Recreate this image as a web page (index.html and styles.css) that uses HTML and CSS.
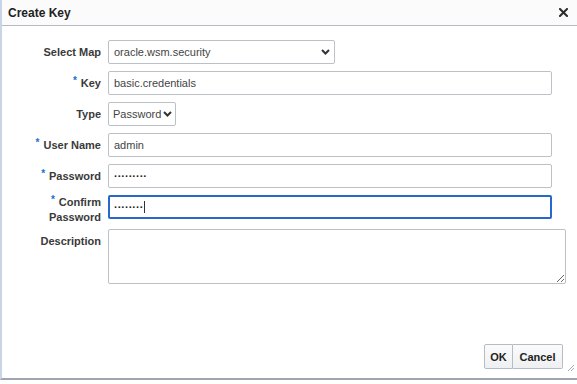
FILE: index.html
```html
<!DOCTYPE html>
<html>
<head>
<meta charset="utf-8">
<link rel="stylesheet" href="styles.css">
</head>
<body>
<div class="dialog">
  <div class="titlebar">
    <span class="title">Create Key</span>
    <svg class="close" width="9" height="9" viewBox="0 0 9 9"><path d="M1 1 L8 8 M8 1 L1 8" stroke="#2b2b2b" stroke-width="2" stroke-linecap="square"/></svg>
  </div>
  <div class="form">
    <label class="lbl">Select Map</label>
    <div class="field"><select class="sel sel-map"><option>oracle.wsm.security</option></select></div>

    <label class="lbl"><span class="req">*</span>Key</label>
    <div class="field"><input class="inp" type="text" value="basic.credentials"></div>

    <label class="lbl">Type</label>
    <div class="field"><select class="sel sel-type"><option>Password</option></select></div>

    <label class="lbl"><span class="req">*</span>User Name</label>
    <div class="field"><input class="inp" type="text" value="admin"></div>

    <label class="lbl"><span class="req">*</span>Password</label>
    <div class="field"><input class="inp dots" type="text" value="·········"></div>

    <label class="lbl two"><span class="req">*</span>Confirm<br>Password</label>
    <div class="field"><div class="inp focus dots">········<span class="caret"></span></div></div>

    <label class="lbl top">Description</label>
    <div class="field"><textarea class="ta"></textarea></div>
  </div>
  <div class="footer">
    <div class="btns">
      <button class="btn ok">OK</button><button class="btn cancel">Cancel</button>
    </div>
  </div>
  <svg class="grip" width="8" height="8" viewBox="0 0 8 8"><path d="M7 1 L1 7 M7 4 L4 7" stroke="#a9adb3" stroke-width="1"/></svg>
</div>
</body>
</html>
```
FILE: styles.css
```css
* { box-sizing: border-box; }
html, body { margin: 0; padding: 0; background: #fff; }
body { font-family: "Liberation Sans", Arial, sans-serif; color: #333; }

.dialog {
  position: relative;
  width: 577px;
  height: 380px;
  border-left: 2px solid #c9d4e6;
  border-bottom: 2px solid #9ea5b0;
  display: flex;
  flex-direction: column;
  background: #fff;
}

.titlebar {
  height: 26px;
  border-bottom: 1px solid #b5bac2;
  display: flex;
  align-items: center;
  justify-content: space-between;
  padding: 0 9px 0 6px;
  background: #fbfbfc;
}
.title { font-size: 12px; font-weight: bold; color: #222; }
.close { display: block; }

.form {
  display: grid;
  grid-template-columns: 99px 1fr;
  column-gap: 7px;
  row-gap: 7px;
  padding-top: 14px;
  padding-right: 10px;
}

.lbl {
  font-size: 11px;
  font-weight: bold;
  color: #3a3a3a;
  text-align: right;
  align-self: center;
  line-height: 13px;
}
.lbl.two { line-height: 14px; margin: -2px 0 -2px 0; padding-top: 2px; }
.lbl.top { align-self: start; padding-top: 6px; }
.req {
  color: #1a6fd1;
  font-size: 10px;
  position: relative;
  top: -3px;
  margin-right: 4px;
}

.field { display: flex; }

.inp {
  width: 444px;
  height: 24px;
  border: 1px solid #bcc1c8;
  border-radius: 2px;
  padding: 0 5px;
  font-family: "Liberation Sans", Arial, sans-serif;
  font-size: 11px;
  color: #444;
  background: #fff;
  display: flex;
  align-items: center;
  outline: none;
}
.dots { font-size: 11px; color: #222; font-weight: bold; }
.focus { border: 2px solid #2768cc; padding: 0 4px; }
.caret { display: inline-block; width: 1px; height: 12px; background: #333; margin-left: 1px; }

.sel {
  -webkit-appearance: none;
  appearance: none;
  height: 24px;
  border: 1px solid #bcc1c8;
  border-radius: 2px;
  padding: 0 18px 0 5px;
  font-family: "Liberation Sans", Arial, sans-serif;
  font-size: 11px;
  color: #444;
  background: #fff url("data:image/svg+xml,%3Csvg xmlns='http://www.w3.org/2000/svg' width='9' height='6' viewBox='0 0 9 6'%3E%3Cpath d='M1 1 L4.5 4.5 L8 1' fill='none' stroke='%23333' stroke-width='2'/%3E%3C/svg%3E") no-repeat right 4px center;
}
.sel-map { width: 227px; }
.sel-type { width: 68px; padding: 0 12px 0 4px; background-position: right 3px center; }

.ta {
  width: 458px;
  height: 55px;
  border: 1px solid #bcc1c8;
  border-radius: 2px;
  font-family: "Liberation Sans", Arial, sans-serif;
  font-size: 11px;
  resize: both;
}

.footer {
  margin-top: auto;
  display: flex;
  justify-content: flex-end;
  padding: 0 14px 9px 0;
}
.btns { display: flex; }
.btn {
  height: 25px;
  border: 1px solid #b7bcc4;
  background: linear-gradient(#fafbfc, #eef0f2);
  font-family: "Liberation Sans", Arial, sans-serif;
  font-size: 11px;
  font-weight: bold;
  color: #222;
  padding: 0;
}
.ok { width: 29px; border-radius: 2px 0 0 2px; }
.cancel { width: 50px; border-left: none; border-radius: 0 2px 2px 0; }

.grip { position: absolute; right: 2px; bottom: 6px; }
```
